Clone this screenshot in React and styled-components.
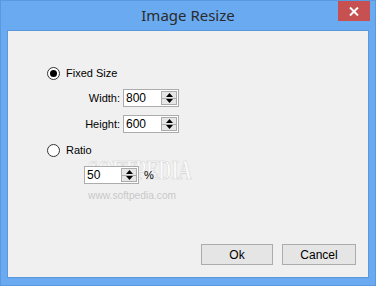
import React from "react";
import styled, { createGlobalStyle } from "styled-components";

const Global = createGlobalStyle`
  html, body { margin: 0; padding: 0; background: #6aaaf1; }
  * { box-sizing: border-box; }
`;

const Window = styled.div`
  width: 376px;
  height: 286px;
  background: #6aaaf1;
  border: 1px solid #5a99e0;
  display: flex;
  flex-direction: column;
  font-family: "Liberation Sans", Arial, sans-serif;
  font-size: 11px;
  color: #000;
`;

const TitleBar = styled.div`
  height: 29px;
  position: relative;
  display: flex;
  align-items: center;
  justify-content: center;
`;

const Title = styled.div`
  font-family: "Noto Sans", "Open Sans", sans-serif;
  font-size: 15px;
  color: #2b2b2b;
  margin-top: -1px;
`;

const CloseBtn = styled.div`
  position: absolute;
  top: 0;
  right: 5px;
  width: 32px;
  height: 20px;
  background: #c75050;
  display: flex;
  align-items: center;
  justify-content: center;
`;

const Client = styled.div`
  flex: 1;
  margin: 0 6px 7px 6px;
  border: 1px solid #5a97dc;
  background: #f0f0f0;
  position: relative;
  display: flex;
  flex-direction: column;
  padding: 35px 12px 12px 39px;
`;

const RadioRow = styled.label`
  display: flex;
  align-items: center;
  gap: 6px;
  height: 14px;
  margin-top: ${(p) => p.$mt || 0}px;
`;

const RadioCircle = styled.span`
  width: 13px;
  height: 13px;
  border-radius: 50%;
  border: 1px solid #333;
  background: #fff;
  display: flex;
  align-items: center;
  justify-content: center;
  &::after {
    content: "";
    width: 7px;
    height: 7px;
    border-radius: 50%;
    background: ${(p) => (p.$checked ? "#000" : "transparent")};
  }
`;

const FieldGrid = styled.div`
  display: grid;
  grid-template-columns: 40px 56px;
  column-gap: 3px;
  row-gap: 8px;
  align-items: center;
  margin: 9px 0 0 33px;
`;

const Label = styled.span`
  text-align: right;
`;

const NumBox = styled.div`
  width: ${(p) => p.$w}px;
  height: 18px;
  background: #fff;
  border: 1px solid #acacac;
  display: flex;
  align-items: center;
  justify-content: space-between;
  padding: 0 1px 0 2px;
  font-size: 12px;
`;

const Spinner = styled.div`
  width: 16px;
  height: 14px;
  display: flex;
  flex-direction: column;
`;

const SpinBtn = styled.div`
  flex: 1;
  background: #e6e6e6;
  border: 1px solid #acacac;
  display: flex;
  align-items: center;
  justify-content: center;
  & + & { border-top: none; }
`;

const RatioRow = styled.div`
  position: relative;
  z-index: 1;
  display: flex;
  align-items: center;
  gap: 5px;
  margin: 9px 0 0 37px;
`;

const Buttons = styled.div`
  margin-top: auto;
  display: flex;
  justify-content: flex-end;
  gap: 9px;
`;

const Button = styled.div`
  width: ${(p) => p.$w}px;
  height: 21px;
  border: 1px solid #acacac;
  background: #e5e5e5;
  display: flex;
  align-items: center;
  justify-content: center;
  font-size: 12px;
`;

const Watermark = styled.div`
  position: absolute;
  z-index: 0;
  left: 80px;
  top: 126px;
  font-family: "Liberation Serif", serif;
  font-weight: bold;
  font-size: 27px;
  line-height: 27px;
  color: rgba(255, 255, 255, 0.7);
  -webkit-text-stroke: 0.7px rgba(195, 195, 195, 0.7);
  transform: scaleX(0.67);
  transform-origin: left center;
  pointer-events: none;
`;

const WatermarkUrl = styled.div`
  position: absolute;
  left: 80px;
  top: 158px;
  font-size: 11px;
  color: rgba(185, 185, 185, 0.75);
  transform: scaleX(0.93);
  transform-origin: left center;
  pointer-events: none;
`;

const Tri = ({ up }) => (
  <svg width="7" height="4" viewBox="0 0 7 4">
    <path d={up ? "M0 4 L3.5 0 L7 4 Z" : "M0 0 L3.5 4 L7 0 Z"} fill="#000" />
  </svg>
);

const Spin = () => (
  <Spinner>
    <SpinBtn><Tri up /></SpinBtn>
    <SpinBtn><Tri /></SpinBtn>
  </Spinner>
);

export default function App() {
  return (
    <>
      <Global />
      <Window>
        <TitleBar>
          <Title>Image Resize</Title>
          <CloseBtn>
            <svg width="10" height="9" viewBox="0 0 10 9">
              <path d="M1 0.5 L9 8.5 M9 0.5 L1 8.5" stroke="#fff" strokeWidth="2" />
            </svg>
          </CloseBtn>
        </TitleBar>
        <Client>
          <Watermark>SOFTPEDIA</Watermark>
          <WatermarkUrl>www.softpedia.com</WatermarkUrl>
          <RadioRow>
            <RadioCircle $checked />
            <span>Fixed Size</span>
          </RadioRow>
          <FieldGrid>
            <Label>Width:</Label>
            <NumBox $w={56}><span>800</span><Spin /></NumBox>
            <Label>Height:</Label>
            <NumBox $w={56}><span>600</span><Spin /></NumBox>
          </FieldGrid>
          <RadioRow $mt={10}>
            <RadioCircle />
            <span>Ratio</span>
          </RadioRow>
          <RatioRow>
            <NumBox $w={55}><span>50</span><Spin /></NumBox>
            <span>%</span>
          </RatioRow>
          <Buttons>
            <Button $w={72}>Ok</Button>
            <Button $w={74}>Cancel</Button>
          </Buttons>
        </Client>
      </Window>
    </>
  );
}
